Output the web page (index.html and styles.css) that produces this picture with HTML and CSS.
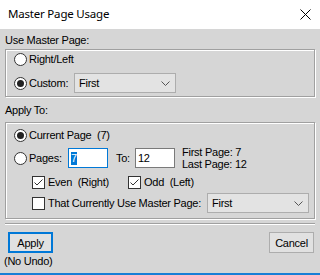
FILE: index.html
```html
<!DOCTYPE html>
<html>
<head>
<meta charset="utf-8">
<link rel="stylesheet" href="styles.css">
</head>
<body>
<div class="window">
  <div class="titlebar">
    <span class="title">Master Page Usage</span>
    <svg class="close" width="11" height="11" viewBox="0 0 11 11"><path d="M0.5 0.5L10.5 10.5M10.5 0.5L0.5 10.5" stroke="#000" stroke-width="1" fill="none"/></svg>
  </div>
  <div class="client">
    <div class="label label-use">Use Master Page:</div>
    <div class="group g1">
      <div class="row h16"><span class="radio"></span><span class="txt">Right/Left</span></div>
      <div class="row h20 gap6"><span class="radio on"></span><span class="txt w-custom">Custom:</span>
        <div class="combo"><span>First</span><svg class="chev" width="9" height="5" viewBox="0 0 9 5"><polyline points="0.5,0.5 4.5,4.5 8.5,0.5" fill="none" stroke="#555" stroke-width="1"/></svg></div>
      </div>
    </div>
    <div class="label label-apply">Apply To:</div>
    <div class="group g2">
      <div class="row h16"><span class="radio on"></span><span class="txt">Current Page  (7)</span></div>
      <div class="row h20 gap5"><span class="radio"></span><span class="txt w-pages">Pages:</span>
        <div class="edit focus"><span class="sel">7</span></div>
        <span class="txt w-to">To:</span>
        <div class="edit">12</div>
        <div class="range">First Page: 7
Last Page: 12</div>
      </div>
      <div class="row h16 gap6 indent"><span class="check"><svg width="11" height="11" viewBox="0 0 11 11"><polyline points="1.5,5.5 4,8 9.5,2.5" fill="none" stroke="#333" stroke-width="1"/></svg></span><span class="ctxt w-even">Even  (Right)</span><span class="check"><svg width="11" height="11" viewBox="0 0 11 11"><polyline points="1.5,5.5 4,8 9.5,2.5" fill="none" stroke="#333" stroke-width="1"/></svg></span><span class="ctxt">Odd  (Left)</span></div>
      <div class="row h20 gap3 indent"><span class="check"></span><span class="ctxt w-curr">That Currently Use Master Page:</span>
        <div class="combo"><span>First</span><svg class="chev" width="9" height="5" viewBox="0 0 9 5"><polyline points="0.5,0.5 4.5,4.5 8.5,0.5" fill="none" stroke="#555" stroke-width="1"/></svg></div>
      </div>
    </div>
    <div class="sep"></div>
    <div class="buttons"><button class="btn default">Apply</button><button class="btn">Cancel</button></div>
    <div class="note">(No Undo)</div>
  </div>
</div>
</body>
</html>
```
FILE: styles.css
```css
* { box-sizing: border-box; }
body {
  margin: 0;
  font: 11px "Liberation Sans", Arial, sans-serif;
  letter-spacing: -0.25px;
  color: #000;
}
.window {
  width: 320px;
  height: 275px;
  background: #d6d6d6;
  border-bottom: 2px solid #1a7fd6;
  display: flex;
  flex-direction: column;
  overflow: hidden;
}
.titlebar {
  height: 29px;
  flex: none;
  background: #fff;
  display: flex;
  align-items: center;
  padding-left: 8px;
}
.title {
  flex: 1;
  font: 11.5px "Noto Sans", sans-serif;
  letter-spacing: -0.2px;
  line-height: 16px;
  margin-top: -1px;
}
.close { margin-right: 9px; }
.client { display: flex; flex-direction: column; }
.label { line-height: 13px; padding-left: 5px; }
.label-use { margin-top: 5px; }
.label-apply { margin-top: 7px; }
.group {
  margin: 2px 5px 0;
  border: 1px solid #a0a0a0;
  box-shadow: inset 1px 1px 0 #fff, 1px 1px 0 #fff;
  display: flex;
  flex-direction: column;
  padding-left: 8px;
}
.g1 { padding-top: 1px; padding-bottom: 3px; }
.g2 { margin-top: 5px; padding-top: 4px; padding-bottom: 5px; }
.row { display: flex; align-items: center; }
.h16 { height: 16px; }
.h20 { height: 20px; }
.gap3 { margin-top: 3px; }
.gap5 { margin-top: 5px; }
.gap6 { margin-top: 6px; }
.indent { padding-left: 18px; }
.radio {
  flex: none;
  width: 13px;
  height: 13px;
  border: 1px solid #333;
  border-radius: 50%;
  background: #fff;
  position: relative;
}
.radio.on::after {
  content: "";
  position: absolute;
  left: 2px;
  top: 2px;
  width: 7px;
  height: 7px;
  border-radius: 50%;
  background: #222;
}
.txt { margin-left: 2px; white-space: pre; line-height: 13px; flex: none; }
.ctxt { margin-left: 3px; white-space: pre; line-height: 13px; flex: none; }
.w-custom { width: 45px; }
.w-pages { width: 39px; }
.w-to { margin-left: 8px; width: 19px; }
.w-even { width: 80px; }
.w-curr { width: 159px; }
.check {
  flex: none;
  width: 13px;
  height: 13px;
  border: 1px solid #333;
  background: #fff;
  display: flex;
}
.combo {
  flex: none;
  width: 102px;
  height: 20px;
  border: 1px solid #adadad;
  background: #e3e3e3;
  display: flex;
  align-items: center;
  justify-content: space-between;
  padding: 0 5px 0 4px;
}
.chev { margin-top: 1px; }
.edit {
  flex: none;
  width: 40px;
  height: 20px;
  border: 1px solid #7a7a7a;
  background: #fff;
  display: flex;
  align-items: center;
  padding-left: 2px;
  line-height: 13px;
}
.edit.focus { border-color: #0078d7; }
.sel { background: #0078d7; color: #fff; }
.range { margin-left: 7px; line-height: 12px; white-space: pre; }
.sep {
  margin: 4px 5px 0;
  height: 1px;
  background: #a0a0a0;
  box-shadow: 0 1px 0 #fff;
}
.buttons {
  display: flex;
  justify-content: space-between;
  padding: 0 6px 0 8px;
  margin-top: 8px;
}
.btn {
  width: 45px;
  height: 21px;
  padding: 0;
  font: 11px "Liberation Sans", Arial, sans-serif;
  letter-spacing: -0.25px;
  color: #000;
  background: #e1e1e1;
  border: 1px solid #adadad;
}
.btn.default { border: 2px solid #0078d7; }
.note { margin-top: 2px; padding-left: 4px; line-height: 13px; }
```
